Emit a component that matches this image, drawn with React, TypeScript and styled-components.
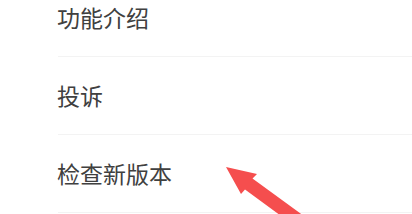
import styled, { createGlobalStyle } from "styled-components";

const GlobalStyle = createGlobalStyle`
  html, body {
    margin: 0;
    padding: 0;
    background: #ffffff;
    overflow: hidden;
  }
  body {
    font-family: "Noto Sans CJK SC", "Noto Sans", sans-serif;
  }
`;

const Screen = styled.div`
  position: relative;
  width: 412px;
  height: 214px;
  overflow: hidden;
  background: #ffffff;
`;

const MenuList = styled.ul`
  list-style: none;
  margin: -21px 0 0 0;
  padding: 0 0 0 58px;
`;

const MenuItem = styled.li`
  display: flex;
  align-items: center;
  box-sizing: border-box;
  height: 78px;
  padding-bottom: 1px;
  border-bottom: 1px solid #f3f3f3;
  color: #404040;
  font-size: 23px;
`;

const Label = styled.span`
  margin-left: -1px;
`;

const Pointer = styled.svg`
  position: absolute;
  left: 0;
  top: 0;
  width: 412px;
  height: 214px;
  pointer-events: none;
`;

const items = ["功能介绍", "投诉", "检查新版本"];

function App() {
  return (
    <>
      <GlobalStyle />
      <Screen>
        <MenuList>
          {items.map((item) => (
            <MenuItem key={item}>
              <Label>{item}</Label>
            </MenuItem>
          ))}
        </MenuList>
        <Pointer viewBox="0 0 412 214">
          <polygon
            points="226,167 257,174 252.5,178.5 330,235 322,246 245,189.5 241,194"
            fill="#f54e4e"
            strokeLinejoin="round"
          />
        </Pointer>
      </Screen>
    </>
  );
}

export default App;
